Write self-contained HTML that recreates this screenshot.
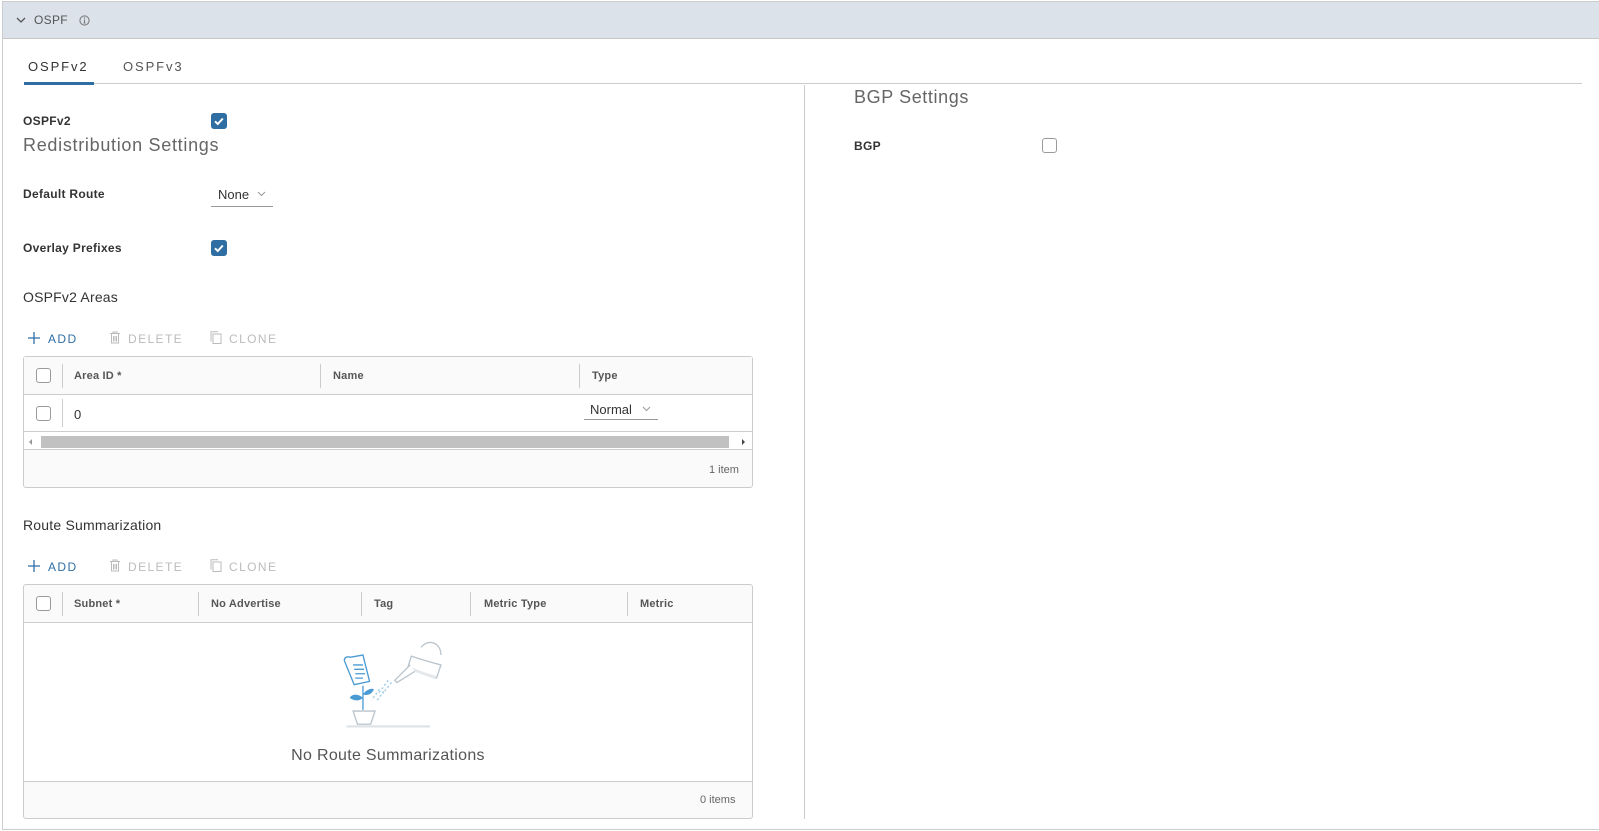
<!DOCTYPE html>
<html><head><meta charset="utf-8"><style>
*{box-sizing:border-box;margin:0;padding:0}
body{width:1599px;height:831px;background:#fff;font-family:"Liberation Sans",sans-serif;color:#333;position:relative;overflow:hidden}
.a{position:absolute}
.lbl{font-size:12px;font-weight:bold;color:#333;letter-spacing:0.3px}
.cb{position:absolute;width:15px;height:15px;border:1px solid #9a9a9a;border-radius:3px;background:#fff}
.cbc{position:absolute;width:16px;height:16px;border-radius:3px;background:#2f6ea3}
.th{font-size:11px;font-weight:bold;color:#565656;letter-spacing:0.2px}
.sep{position:absolute;width:1px;background:#ccc}
.btn{font-size:12px;letter-spacing:1.4px}
</style></head><body>
<div class="a" style="left:2px;top:1px;width:1600px;height:829px;border:1px solid #ccc;border-right:none"></div>
<div class="a" style="left:3px;top:2px;width:1596px;height:37px;background:#dbe2ea;border-bottom:1px solid #c8c8c8"></div>
<svg class="a" style="left:16px;top:16px" width="10" height="8"><path d="M1 2l4 4 4-4" stroke="#555" stroke-width="1.3" fill="none"/></svg>
<div class="a" style="left:34px;top:13px;font-size:12px;color:#555;letter-spacing:0.3px">OSPF</div>
<svg class="a" style="left:79px;top:15px" width="11" height="11"><circle cx="5.5" cy="5.5" r="4.6" stroke="#777" fill="none"/><path d="M5.5 4.5v3.5M4.5 8h2" stroke="#777"/><circle cx="5.5" cy="3" r=".7" fill="#777"/></svg>

<div class="a" style="left:24px;top:83px;width:1558px;height:1px;background:#ccc"></div>
<div class="a" style="left:24px;top:82px;width:70px;height:3px;background:#2f6ea3"></div>
<div class="a" style="left:28px;top:59px;font-size:13px;letter-spacing:1.9px;color:#333">OSPFv2</div>
<div class="a" style="left:123px;top:59px;font-size:13px;letter-spacing:1.9px;color:#555">OSPFv3</div>
<div class="sep" style="left:804px;top:85px;height:734px"></div>

<div class="a lbl" style="left:23px;top:114px">OSPFv2</div>
<div class="cbc" style="left:211px;top:113px"></div>
<svg class="a" style="left:211px;top:113px" width="16" height="16"><path d="M4 8.3l2.8 2.7 5-5.5" stroke="#fff" stroke-width="2" fill="none"/></svg>
<div class="a" style="left:23px;top:135px;font-size:18px;color:#666;letter-spacing:0.7px">Redistribution Settings</div>
<div class="a lbl" style="left:23px;top:187px">Default Route</div>
<div class="a" style="left:218px;top:187px;font-size:13px;color:#333">None</div>
<svg class="a" style="left:257px;top:191px" width="9" height="6"><path d="M1 1l3.5 3.5L8 1" stroke="#999" fill="none"/></svg>
<div class="a" style="left:211px;top:206px;width:62px;height:1px;background:#999"></div>
<div class="a lbl" style="left:23px;top:241px">Overlay Prefixes</div>
<div class="cbc" style="left:211px;top:240px"></div>
<svg class="a" style="left:211px;top:240px" width="16" height="16"><path d="M4 8.3l2.8 2.7 5-5.5" stroke="#fff" stroke-width="2" fill="none"/></svg>
<div class="a" style="left:23px;top:289px;font-size:14px;color:#333;letter-spacing:0.2px">OSPFv2 Areas</div>

<svg class="a" style="left:28px;top:332px" width="12" height="12"><path d="M6 0v12M0 6h12" stroke="#2f6ea3" stroke-width="1.3"/></svg>
<div class="a btn" style="left:48px;top:332px;color:#2f6ea3">ADD</div>
<svg class="a" style="left:109px;top:331px" width="12" height="13"><path d="M1 2.5h10M4 2.5V1h4v1.5M2.5 3v9h7V3M4.5 5v5.5M6 5v5.5M7.5 5v5.5" stroke="#bbb" fill="none"/></svg>
<div class="a btn" style="left:128px;top:332px;color:#bbb">DELETE</div>
<svg class="a" style="left:210px;top:331px" width="12" height="13"><path d="M3 3h8v9.5H3zM1 10.5V.8h7" stroke="#bbb" fill="none"/></svg>
<div class="a btn" style="left:229px;top:332px;color:#bbb">CLONE</div>

<div class="a" style="left:23px;top:356px;width:730px;height:132px;border:1px solid #ccc;border-radius:3px;background:#fafafa"></div>
<div class="a" style="left:24px;top:394px;width:728px;height:38px;background:#fff;border-top:1px solid #ccc;border-bottom:1px solid #ccc"></div>
<div class="a" style="left:24px;top:357px;width:728px;height:37px;background:#fafafa"></div>
<div class="cb" style="left:36px;top:368px"></div>
<div class="sep" style="left:62px;top:364px;height:24px"></div>
<div class="a th" style="left:74px;top:370px">Area ID *</div>
<div class="sep" style="left:320px;top:364px;height:24px"></div>
<div class="a th" style="left:333px;top:370px">Name</div>
<div class="sep" style="left:579px;top:364px;height:24px"></div>
<div class="a th" style="left:592px;top:370px">Type</div>
<div class="cb" style="left:36px;top:406px"></div>
<div class="sep" style="left:62px;top:399px;height:28px"></div>
<div class="a" style="left:74px;top:407px;font-size:13px;color:#333">0</div>
<div class="a" style="left:590px;top:402px;font-size:13px;color:#333">Normal</div>
<svg class="a" style="left:642px;top:406px" width="9" height="6"><path d="M1 1l3.5 3.5L8 1" stroke="#999" fill="none"/></svg>
<div class="a" style="left:584px;top:419px;width:74px;height:1px;background:#999"></div>
<div class="a" style="left:24px;top:432px;width:728px;height:18px;background:#fff;border-bottom:1px solid #ccc"></div>
<div class="a" style="left:41px;top:436px;width:688px;height:12px;background:#c1c1c1"></div>
<svg class="a" style="left:28px;top:438px" width="6" height="8"><path d="M4 1L1 4l3 3z" fill="#999"/></svg>
<svg class="a" style="left:741px;top:438px" width="6" height="8"><path d="M1 1l3 3-3 3z" fill="#444"/></svg>
<div class="a" style="left:709px;top:464px;font-size:11px;color:#666">1 item</div>

<div class="a" style="left:23px;top:517px;font-size:14px;color:#333;letter-spacing:0.2px">Route Summarization</div>
<svg class="a" style="left:28px;top:560px" width="12" height="12"><path d="M6 0v12M0 6h12" stroke="#2f6ea3" stroke-width="1.3"/></svg>
<div class="a btn" style="left:48px;top:560px;color:#2f6ea3">ADD</div>
<svg class="a" style="left:109px;top:559px" width="12" height="13"><path d="M1 2.5h10M4 2.5V1h4v1.5M2.5 3v9h7V3M4.5 5v5.5M6 5v5.5M7.5 5v5.5" stroke="#bbb" fill="none"/></svg>
<div class="a btn" style="left:128px;top:560px;color:#bbb">DELETE</div>
<svg class="a" style="left:210px;top:559px" width="12" height="13"><path d="M3 3h8v9.5H3zM1 10.5V.8h7" stroke="#bbb" fill="none"/></svg>
<div class="a btn" style="left:229px;top:560px;color:#bbb">CLONE</div>

<div class="a" style="left:23px;top:584px;width:730px;height:235px;border:1px solid #ccc;border-radius:3px;background:#fafafa"></div>
<div class="a" style="left:24px;top:622px;width:728px;height:160px;background:#fff;border-top:1px solid #ccc;border-bottom:1px solid #ccc"></div>
<div class="cb" style="left:36px;top:596px"></div>
<div class="sep" style="left:62px;top:592px;height:24px"></div>
<div class="a th" style="left:74px;top:598px">Subnet *</div>
<div class="sep" style="left:198px;top:592px;height:24px"></div>
<div class="a th" style="left:211px;top:598px">No Advertise</div>
<div class="sep" style="left:361px;top:592px;height:24px"></div>
<div class="a th" style="left:374px;top:598px">Tag</div>
<div class="sep" style="left:470px;top:592px;height:24px"></div>
<div class="a th" style="left:484px;top:598px">Metric Type</div>
<div class="sep" style="left:627px;top:592px;height:24px"></div>
<div class="a th" style="left:640px;top:598px">Metric</div>

<svg class="a" style="left:342px;top:632px" width="110" height="112" viewBox="0 0 100 102" fill="none" stroke-width="1.2">
<path d="M63 22l-3 10c8 4 18 8 26 10l4-12c-8-2-18-5-27-8z" stroke="#b9c4cc" fill="#fff"/>
<path d="M61 31c8 4 17 7 25 9l-1 3-25-9z" fill="#e4e8eb" stroke="none"/>
<path d="M72 14c6-8 18-5 18 7" stroke="#b9c4cc"/>
<path d="M62 30l-14 14 2 2 16-10" stroke="#b9c4cc" fill="#fff"/>
<path d="M45 46l-8 10M42 44l-9 12M38 54l-6 8M34 52l-7 10" stroke="#9fcbe8" stroke-dasharray="2 2"/>
<path d="M2 26c0-3 3-4 5-3l12-2 6 24-14 3z" stroke="#4a9ad4" fill="#fff"/>
<path d="M10 30h9M11 34h9M12 38h9M12 42h7" stroke="#4a9ad4"/>
<path d="M19 49v22" stroke="#4a9ad4"/>
<path d="M19 60c-4-4-10-4-12 0 4 3 9 3 12 0zM19 57c3-5 8-6 10-5-2 5-6 6-10 5z" fill="#4a9ad4" stroke="none"/>
<path d="M10 72h20l-4 12H14z" stroke="#b9c4cc" fill="#fff"/>
<path d="M4 86h76" stroke="#dde2e6" stroke-width="2"/>
</svg>
<div class="a" style="left:268px;top:747px;width:240px;text-align:center;font-size:16px;color:#555;letter-spacing:0.3px">No Route Summarizations</div>
<div class="a" style="left:700px;top:794px;font-size:11px;color:#666">0 items</div>

<div class="a" style="left:854px;top:87px;font-size:18px;color:#666;letter-spacing:0.6px">BGP Settings</div>
<div class="a lbl" style="left:854px;top:139px">BGP</div>
<div class="cb" style="left:1042px;top:138px"></div>
</body></html>
